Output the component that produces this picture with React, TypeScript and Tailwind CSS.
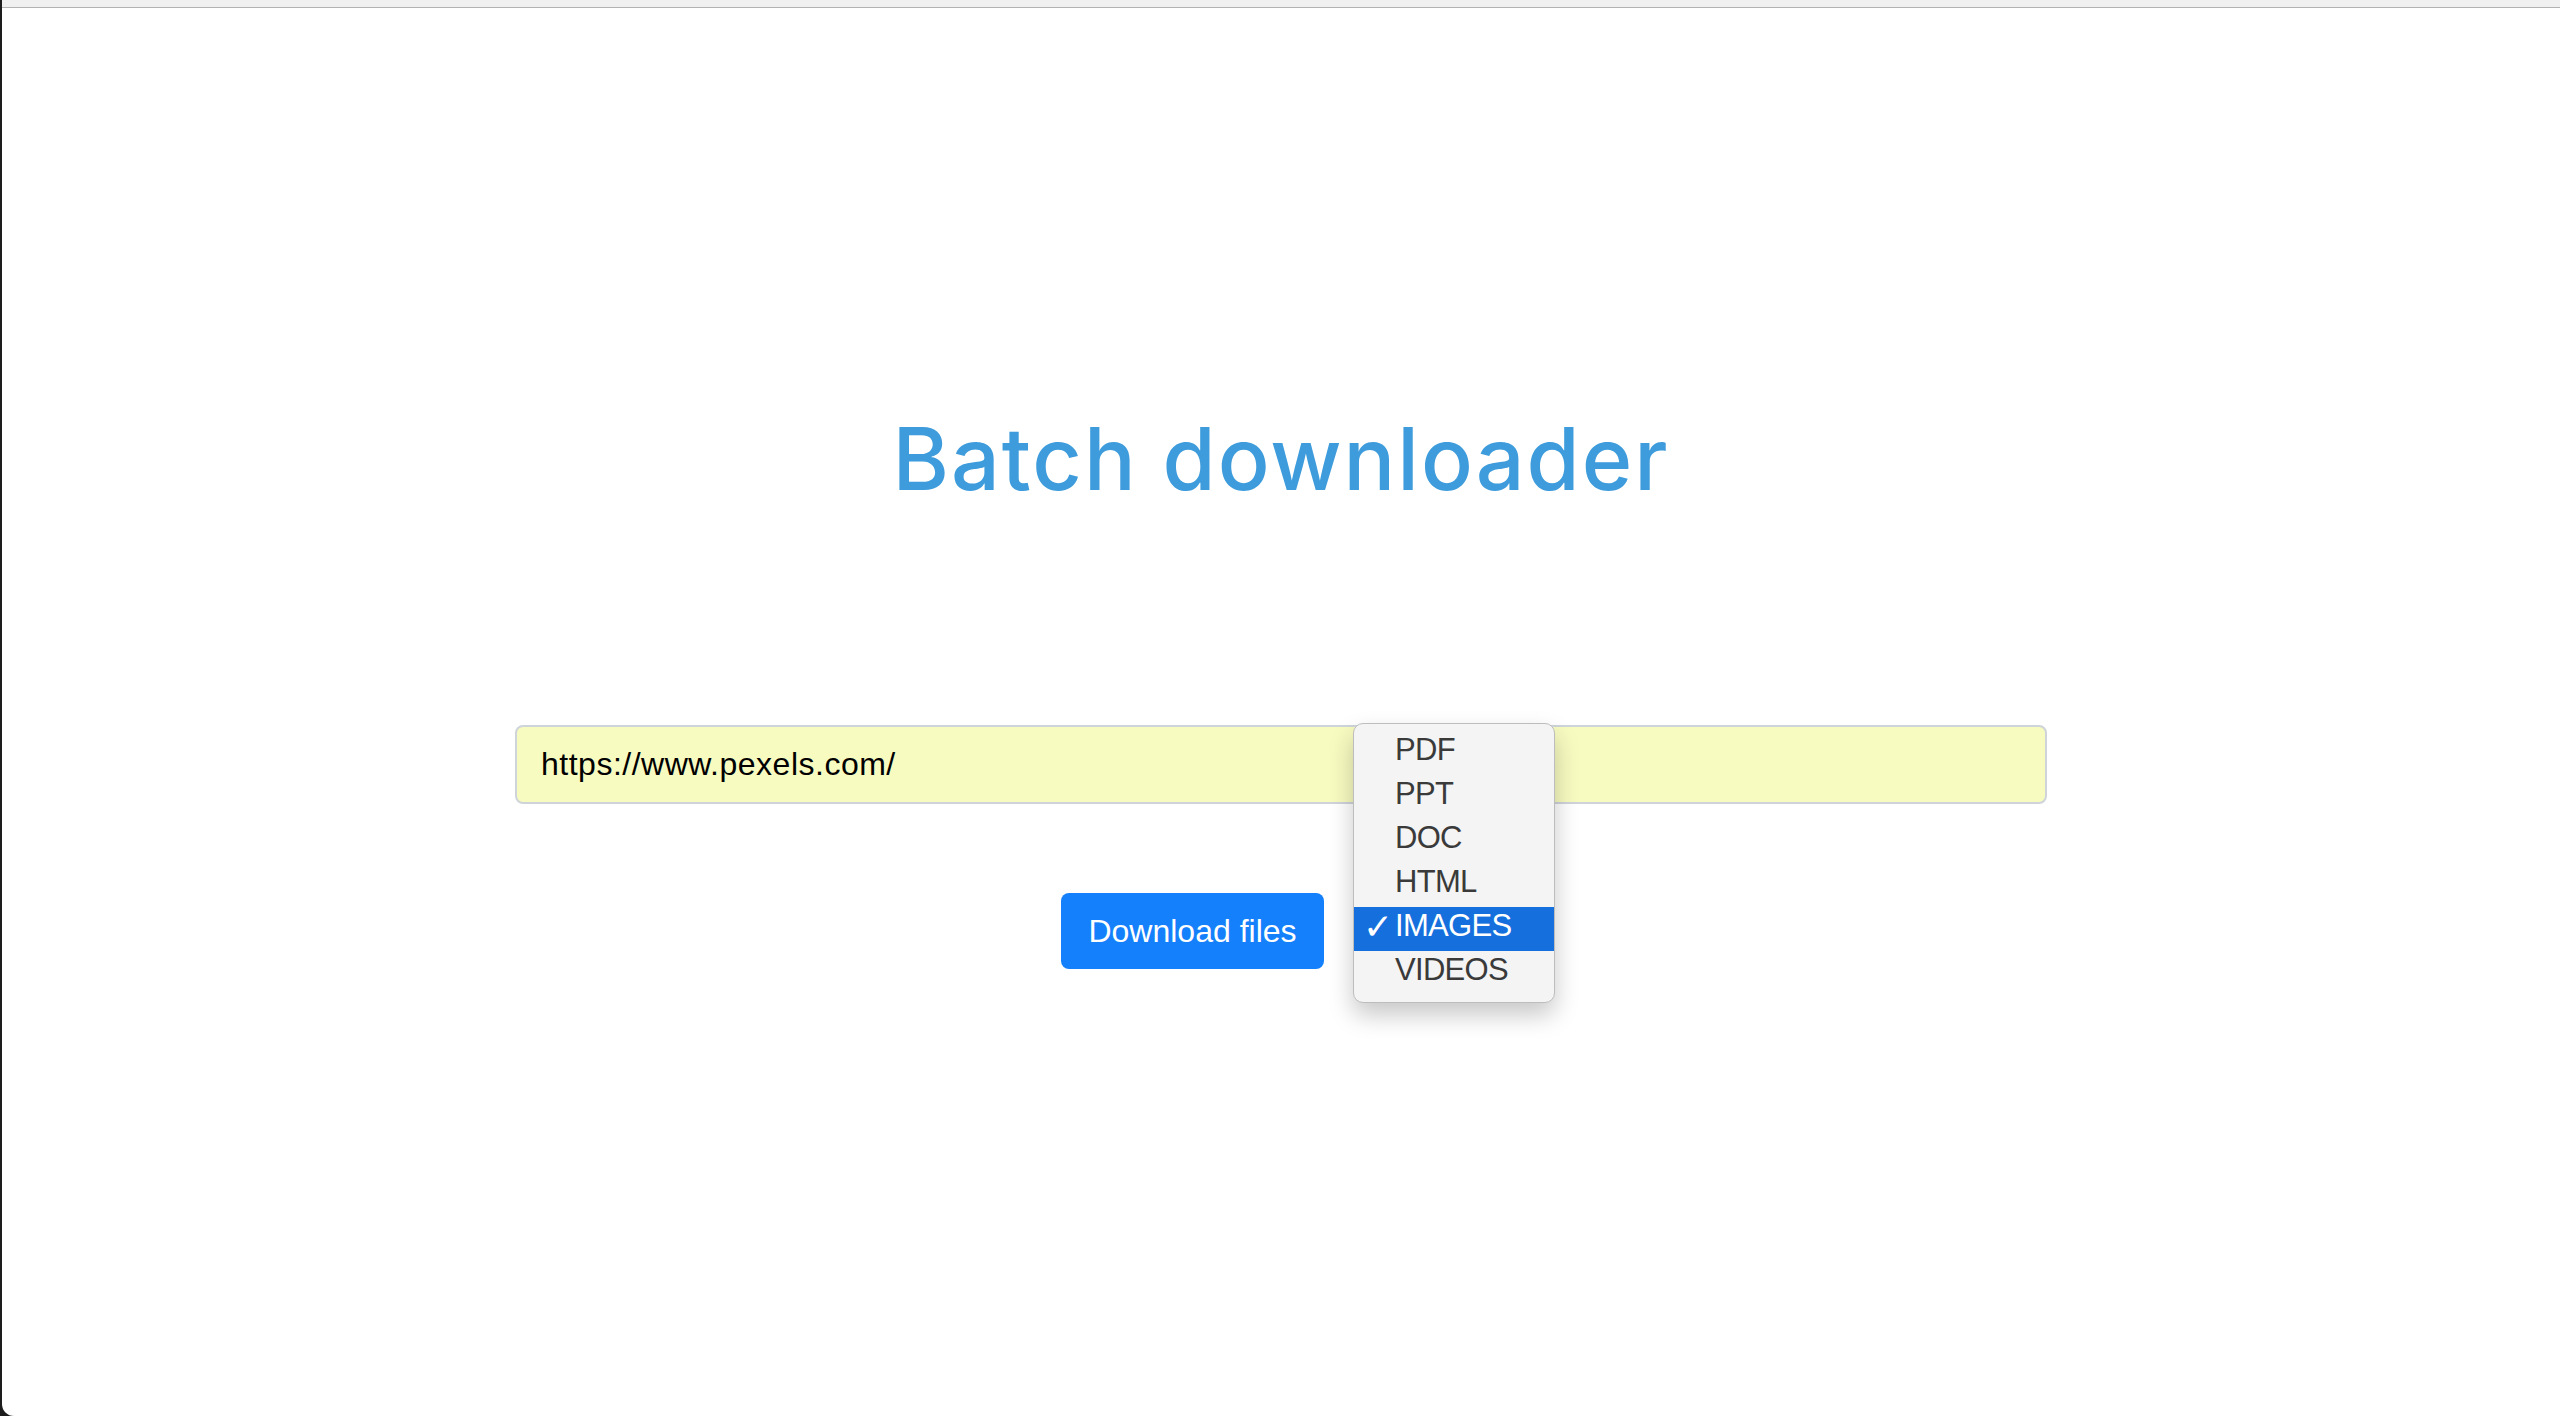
import React from 'react'

const options = ['PDF', 'PPT', 'DOC', 'HTML', 'IMAGES', 'VIDEOS']

export default function App() {
    const selected = 'IMAGES'

    return (
        <div className="w-[2560px] h-[1416px] bg-[#1d1d1d] flex overflow-hidden">
            <div className="ml-[2px] flex-1 bg-white rounded-bl-[12px] flex flex-col">
                <div className="h-[8px] bg-[#f0f0f0] border-b border-[#b2b2b2]" />

                <main className="flex flex-col items-center">
                    <h1 className="mt-[408px] font-['Inter',sans-serif] font-medium text-[86px] leading-none tracking-[2px] text-[#3e9cdc]">
                        Batch downloader
                    </h1>

                    <input
                        type="text"
                        defaultValue="https://www.pexels.com/"
                        className="mt-[223px] w-[1532px] h-[79px] px-[24px] bg-[#f8fbc0] border-2 border-[#ced4da] rounded-[8px] font-['Liberation_Sans',Arial,sans-serif] text-[32px] tracking-[0.5px] text-black outline-none"
                    />

                    <div className="mt-[89px] flex items-center gap-[29px]">
                        <button className="w-[263px] h-[76px] bg-[#1580fb] rounded-[8px] text-white font-['Liberation_Sans',Arial,sans-serif] text-[32px]">
                            Download files
                        </button>

                        <div className="relative w-[148px] h-[76px]">
                            <ul className="absolute top-[-170px] left-0 w-[202px] py-[7px] bg-[#f4f4f4] border border-[#bdbdbd] rounded-[10px] shadow-[0_12px_24px_rgba(0,0,0,0.22)] font-['Liberation_Sans',Arial,sans-serif] text-[31px] tracking-[-0.7px] z-10">
                                {options.map((opt) => (
                                    <li
                                        key={opt}
                                        className={
                                            opt === selected
                                                ? 'relative h-[44px] pl-[41px] pb-[6px] leading-[38px] bg-[#156fdd] text-white'
                                                : 'relative h-[44px] pl-[41px] pb-[6px] leading-[38px] text-[#3a3a3a]'
                                        }
                                    >
                                        {opt === selected && (
                                            <span className="absolute left-[9px] top-[-2px] font-['DejaVu_Sans',sans-serif] font-bold text-[36px] leading-[44px]">
                                                ✓
                                            </span>
                                        )}
                                        {opt}
                                    </li>
                                ))}
                            </ul>
                        </div>
                    </div>
                </main>
            </div>
        </div>
    )
}
